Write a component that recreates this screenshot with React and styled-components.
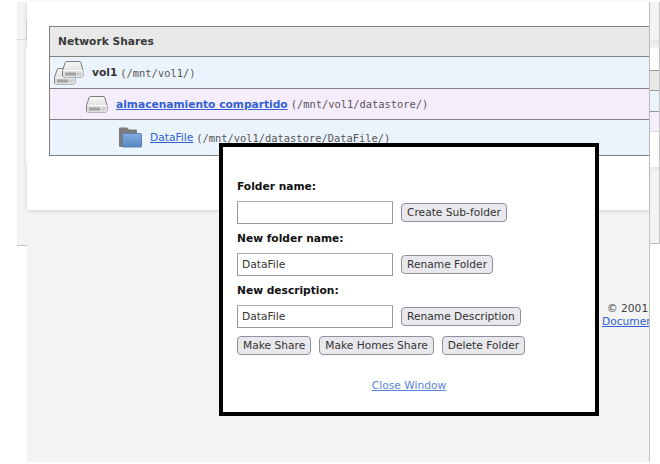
import React from 'react';
import styled, { createGlobalStyle } from 'styled-components';

const Global = createGlobalStyle`
  html, body { margin: 0; padding: 0; background: #fff; }
  body { width: 660px; height: 464px; overflow: hidden; font-family: "DejaVu Sans", sans-serif; font-size: 10.67px; }
`;

const Stage = styled.div`
  position: relative;
  width: 660px;
  height: 464px;
  overflow: hidden;
  background: #fff;
`;

const Page = styled.div`
  display: flex;
  width: 660px;
  padding-top: 2px;
  box-sizing: border-box;
  align-items: flex-start;
`;

const LeftGutter = styled.div`
  width: 17px;
  flex: none;
`;

const LeftStrip = styled.div`
  width: 10px;
  height: 243px;
  flex: none;
  display: flex;
  flex-direction: column;
  align-items: flex-end;
  background: #f3f3f3;
  border-bottom: 1px solid #c0c0c0;
`;

const StripSpace = styled.div`
  height: ${p => p.$h}px;
  flex: none;
`;

const StripRule = styled.div`
  width: 100%;
  height: 21px;
  flex: none;
  box-sizing: border-box;
  border-bottom: 1px solid #dcdcdc;
  border-right: 1px solid #dcdcdc;
  margin-right: 0;
`;

const StripInset = styled.div`
  width: 3px;
  height: 117px;
  flex: none;
  box-sizing: border-box;
  background: #fff;
  border-left: 1px solid #e8e8e8;
`;

const Main = styled.div`
  width: 622px;
  height: 460px;
  flex: none;
  background: #f3f3f3;
  display: flex;
  flex-direction: column;
  border-right: 1px solid #c4c4c4;
`;

const Card = styled.div`
  height: 208px;
  flex: none;
  background: #fff;
  box-shadow: 0 1px 4px rgba(0,0,0,.14);
  padding-top: 24px;
  padding-left: 22px;
  box-sizing: border-box;
`;

const Table = styled.div`
  width: 600px;
  border: 1px solid #808080;
  border-right: 0;
  box-sizing: border-box;
`;

const Header = styled.div`
  height: 29px;
  display: flex;
  align-items: center;
  padding-left: 8px;
  background: #e9e9e9;
  font-weight: bold;
  color: #3a3a3a;
`;

const Row = styled.div`
  height: ${p => p.$h}px;
  display: flex;
  align-items: center;
  padding-left: ${p => p.$indent}px;
  border-top: 1px solid #808080;
  background: ${p => p.$bg};
  color: #444;
`;

const IconBox = styled.span`
  width: 32px;
  height: 28px;
  flex: none;
  margin-right: 6px;
  padding-right: 2px;
  box-sizing: border-box;
  display: flex;
  align-items: center;
  justify-content: flex-end;
`;

const Name = styled.b`
  color: #333;
`;

const Link = styled.a`
  color: #2f62d0;
  text-decoration: underline;
  font-weight: ${p => (p.$bold ? 'bold' : 'normal')};
`;

const Path = styled.span`
  font-family: "DejaVu Sans Mono", monospace;
  font-size: 10.4px;
  color: #555;
  margin-left: 3px;
`;

const Footer = styled.div`
  margin-top: 92px;
  white-space: nowrap;
  color: #444;
  line-height: 13px;
  overflow: hidden;
  padding-left: 575px;
`;

const FooterLine = styled.div`
  padding-left: ${p => p.$pad || 0}px;
`;

const RightStrip = styled.div`
  width: 10px;
  height: 242px;
  flex: none;
  display: flex;
  flex-direction: column;
  box-sizing: border-box;
  background: #f3f3f3;
  border-right: 1px solid #c4c4c4;
  border-bottom: 1px solid #c0c0c0;
`;

const Band = styled.div`
  height: ${p => p.$h}px;
  flex: none;
  box-sizing: border-box;
  background: ${p => p.$bg};
  border-top: ${p => (p.$line ? `1px solid ${p.$line}` : '0')};
`;

const Modal = styled.div`
  position: absolute;
  left: 219px;
  top: 143px;
  width: 380px;
  height: 273px;
  box-sizing: border-box;
  background: #fff;
  border: 4px solid #000;
  padding: 33px 14px 0;
  color: #333;
`;

const Label = styled.div`
  font-weight: bold;
  color: #111;
  height: 13px;
  line-height: 13px;
  margin-bottom: 8px;
`;

const FormRow = styled.div`
  display: flex;
  align-items: center;
  height: 23px;
  margin-bottom: 8px;
`;

const ActionRow = styled.div`
  display: flex;
  gap: 8px;
  height: 19px;
  margin-bottom: 24px;
`;

const Input = styled.input`
  width: 156px;
  height: 23px;
  box-sizing: border-box;
  border: 1px solid #999;
  border-top-color: #aaa;
  padding: 0 4px;
  font: 10.67px "DejaVu Sans", sans-serif;
  color: #333;
  margin-right: 8px;
  background: #fff;
  outline: none;
`;

const Button = styled.button`
  height: 19px;
  padding: 0 5px;
  box-sizing: border-box;
  font: 10.67px "DejaVu Sans", sans-serif;
  color: #333;
  background: #e9e9ed;
  border: 1px solid #8f8f9d;
  border-radius: 4px;
  white-space: nowrap;
`;

const CloseRow = styled.div`
  text-align: center;
  margin-top: 0;
`;

const CloseLink = styled.a`
  color: #5b84e0;
  text-decoration: underline;
`;

const Disk = ({ x = 0, y = 0 }) => (
  <g transform={`translate(${x} ${y})`}>
    <path d="M4.500 0.500h12.500q1.500 0 2 1.500l2 7.500v5q0 1.500-1.500 1.500H2q-1.500 0-1.500-1.500v-5L3 2q.5-1.500 1.500-1.500z" fill="url(#diskTop)" stroke="#7d7d7d" />
    <path d="M1 10h20v5q0 1-1 1H2q-1 0-1-1z" fill="#dedede" />
    <path d="M1 9.500h20" stroke="#fafafa" />
    <rect x="3" y="11.500" width="11" height="3" fill="#a2a2a2" />
    <rect x="15" y="12" width="4" height="2" fill="#cacaca" />
  </g>
);

const DiskDefs = () => (
  <defs>
    <linearGradient id="diskTop" x1="0" y1="0" x2="0" y2="1">
      <stop offset="0" stopColor="#f7f7f7" />
      <stop offset="0.6" stopColor="#e2e2e2" />
      <stop offset="1" stopColor="#d2d2d2" />
    </linearGradient>
  </defs>
);

const StackIcon = () => (
  <svg width="30" height="24" viewBox="0 0 30 24">
    <DiskDefs />
    <Disk x={0} y={7} />
    <Disk x={8} y={0} />
  </svg>
);

const DiskIcon = () => (
  <svg width="22" height="17" viewBox="0 0 22 17">
    <DiskDefs />
    <Disk />
  </svg>
);

const FolderIcon = () => (
  <svg width="23" height="21" viewBox="0 0 23 21">
    <defs>
      <linearGradient id="folderFront" x1="0" y1="0" x2="0" y2="1">
        <stop offset="0" stopColor="#84addf" />
        <stop offset="1" stopColor="#5886c0" />
      </linearGradient>
    </defs>
    <path d="M0 1.500q0-1 1-1h7l2 2h7q1 0 1 1v16.500H1q-1 0-1-1z" fill="#7b7b7d" />
    <path d="M3.500 7.500q0-1 1-1h17q1 0 1 1v11.500q0 1-1 1h-17q-1 0-1-1z" fill="url(#folderFront)" stroke="#5c80ad" />
  </svg>
);

const rightBands = [
  { h: 38, bg: '#f3f3f3' },
  { h: 8, bg: 'linear-gradient(#e6e6e6, #f3f3f3)' },
  { h: 22, bg: '#fff' },
  { h: 20, bg: '#e9e9e9', line: '#999' },
  { h: 21, bg: '#ebf4fc', line: '#999' },
  { h: 20, bg: '#f6edfc', line: '#999' },
  { h: 36, bg: '#fff', line: '#ddd' },
  { h: 6, bg: 'linear-gradient(#e6e6e6, #f3f3f3)' },
];

export default function App() {
  return (
    <Stage>
      <Global />
      <Page>
        <LeftGutter />
        <LeftStrip>
          <StripSpace $h={17} />
          <StripRule />
          <StripSpace $h={8} />
          <StripInset />
        </LeftStrip>
        <Main>
          <Card>
            <Table>
              <Header>Network Shares</Header>
              <Row $h={31} $indent={4} $bg="#ebf4fc">
                <IconBox><StackIcon /></IconBox>
                <Name>vol1</Name><Path>(/mnt/vol1/)</Path>
              </Row>
              <Row $h={30} $indent={28} $bg="#f6edfc">
                <IconBox><DiskIcon /></IconBox>
                <Link href="#" $bold>almacenamiento compartido</Link><Path>(/mnt/vol1/datastore/)</Path>
              </Row>
              <Row $h={35} $indent={62} $bg="#ebf4fc">
                <IconBox><FolderIcon /></IconBox>
                <Link href="#">DataFile</Link><Path>(/mnt/vol1/datastore/DataFile/)</Path>
              </Row>
            </Table>
          </Card>
          <Footer>
            <FooterLine $pad={5}>© 2001</FooterLine>
            <FooterLine><Link href="#">Documentation</Link></FooterLine>
          </Footer>
        </Main>
        <RightStrip>
          {rightBands.map((b, i) => (
            <Band key={i} $h={b.h} $bg={b.bg} $line={b.line} />
          ))}
        </RightStrip>
      </Page>
      <Modal>
        <Label>Folder name:</Label>
        <FormRow><Input /><Button>Create Sub-folder</Button></FormRow>
        <Label>New folder name:</Label>
        <FormRow><Input defaultValue="DataFile" /><Button>Rename Folder</Button></FormRow>
        <Label>New description:</Label>
        <FormRow><Input defaultValue="DataFile" /><Button>Rename Description</Button></FormRow>
        <ActionRow>
          <Button>Make Share</Button>
          <Button>Make Homes Share</Button>
          <Button>Delete Folder</Button>
        </ActionRow>
        <CloseRow><CloseLink href="#">Close Window</CloseLink></CloseRow>
      </Modal>
    </Stage>
  );
}
